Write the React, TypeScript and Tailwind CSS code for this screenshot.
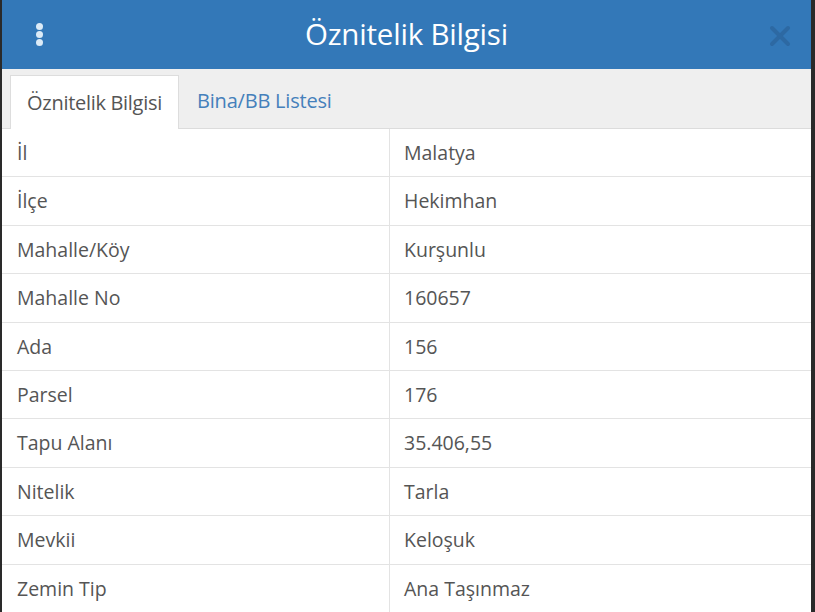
import { X } from "lucide-react";

const rows: [string, string][] = [
  ["İl", "Malatya"],
  ["İlçe", "Hekimhan"],
  ["Mahalle/Köy", "Kurşunlu"],
  ["Mahalle No", "160657"],
  ["Ada", "156"],
  ["Parsel", "176"],
  ["Tapu Alanı", "35.406,55"],
  ["Nitelik", "Tarla"],
  ["Mevkii", "Keloşuk"],
  ["Zemin Tip", "Ana Taşınmaz"],
];

export default function App() {
  return (
    <div className="flex h-[612px] w-[815px] overflow-hidden bg-[#2a2a2a] font-['Open_Sans',sans-serif]">
      <div className="ml-[2px] mr-[4px] flex flex-1 flex-col bg-white">
        {/* başlık */}
        <div className="relative flex h-[69px] shrink-0 items-center justify-center bg-[#3378b8]">
          <div className="absolute left-[34px] top-[23px] flex flex-col gap-[1px]">
            <span className="h-[7px] w-[7px] rounded-full bg-[#dcebf7]" />
            <span className="h-[7px] w-[7px] rounded-full bg-[#dcebf7]" />
            <span className="h-[7px] w-[7px] rounded-full bg-[#dcebf7]" />
          </div>
          <h1 className="text-[29.5px] font-normal tracking-[-0.2px] text-white">Öznitelik Bilgisi</h1>
          <X className="absolute right-[15px] top-[20px] text-[#2d69a3]" size={32} strokeWidth={3} />
        </div>

        {/* sekmeler */}
        <div className="flex h-[60px] shrink-0 items-end border-b border-[#dcdcdc] bg-[#efefef] pl-[8px]">
          <div className="-mb-px flex h-[54px] w-[169px] items-center justify-center border border-b-0 border-[#dddddd] bg-white text-[20px] tracking-[-0.3px] text-[#555]">
            Öznitelik Bilgisi
          </div>
          <div className="flex h-[54px] items-center px-[18px] text-[20px] tracking-[-0.2px] text-[#4580bb]">
            Bina/BB Listesi
          </div>
        </div>

        {/* tablo */}
        <div className="flex flex-1 flex-col">
          {rows.map(([k, v]) => (
            <div key={k} className="grid h-[48.4px] grid-cols-[388px_1fr] border-b border-[#e3e3e3] text-[19.5px] text-[#555]">
              <div className="flex items-center border-r border-[#e3e3e3] pl-[15px]">{k}</div>
              <div className="flex items-center pl-[14px]">{v}</div>
            </div>
          ))}
        </div>
      </div>
    </div>
  );
}
